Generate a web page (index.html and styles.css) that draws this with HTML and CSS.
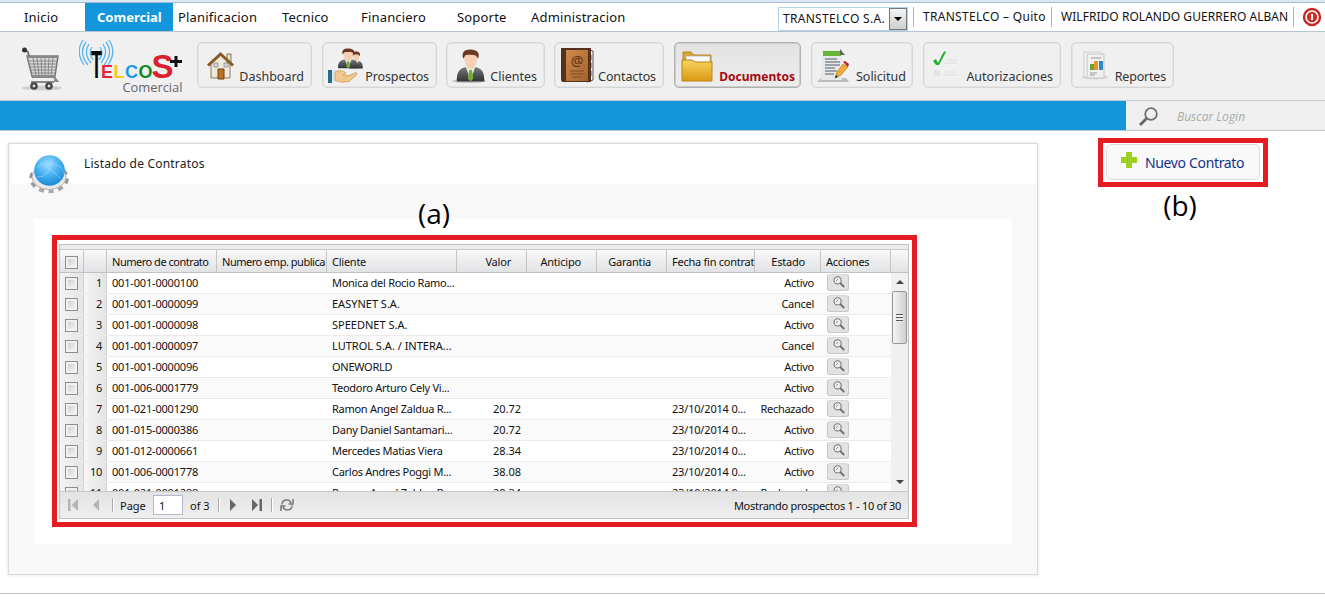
FILE: index.html
```html
<!DOCTYPE html>
<html lang="es">
<head>
<meta charset="utf-8">
<title>Telcos - Comercial</title>
<link rel="stylesheet" href="styles.css">
</head>
<body>
<svg width="0" height="0" class="defs">
  <defs>
    <linearGradient id="gold" x1="0" y1="0" x2="0" y2="1"><stop offset="0" stop-color="#f8d25c"/><stop offset="1" stop-color="#d99a14"/></linearGradient>
    <linearGradient id="suit" x1="0" y1="0" x2="0" y2="1"><stop offset="0" stop-color="#74787a"/><stop offset="1" stop-color="#303335"/></linearGradient>
    <linearGradient id="leather" x1="0" y1="0" x2="1" y2="1"><stop offset="0" stop-color="#d08a4a"/><stop offset="1" stop-color="#a4622c"/></linearGradient>
    <radialGradient id="globe" cx=".45" cy=".3" r=".75"><stop offset="0" stop-color="#9cdcff"/><stop offset=".5" stop-color="#46b0f0"/><stop offset="1" stop-color="#1583d4"/></radialGradient>
    <linearGradient id="metal" x1="0" y1="0" x2="0" y2="1"><stop offset="0" stop-color="#777"/><stop offset="1" stop-color="#aaa"/></linearGradient>
    <g id="person">
      <path d="M3 35c0-9 2-13 9-15l6 2 6-2c7 2 9 6 9 15z" fill="url(#suit)"/>
      <path d="M13 20l5 14 5-14z" fill="#e6efdc"/>
      <path d="M16.500 23h3l1.500 9-3 3-3-3z" fill="#79a83a"/>
      <path d="M11 9c0-6 14-6 14 0 0 7-3 13-7 13s-7-6-7-13z" fill="#f4cfb4"/>
      <path d="M10 11c-2-7 1-10 8-10s11 4 8 10c-1-3-3-4-5-4-4 0-8-1-9 1z" fill="#6b3a22"/>
    </g>
    <symbol id="lens" viewBox="0 0 12 12"><circle cx="4.600" cy="4.400" r="3.600" fill="#ededed" stroke="#777" stroke-width="1.100"/><path d="M7.200 7l4 4" stroke="#6e6e6e" stroke-width="1.800"/><path d="M3 5l2-2" stroke="#999"/></symbol>
  </defs>
</svg>

<nav class="topnav">
  <a class="tab t1">Inicio</a><a class="tab active">Comercial</a><a class="tab t3">Planificacion</a><a class="tab t4">Tecnico</a><a class="tab t5">Financiero</a><a class="tab t6">Soporte</a><a class="tab t7">Administracion</a>
  <div class="session">
    <div class="company"><span>TRANSTELCO S.A.</span><i class="drop"></i></div>
    <span class="office">TRANSTELCO – Quito</span>
    <span class="user">WILFRIDO ROLANDO GUERRERO ALBAN</span>
    <svg class="power" width="20" height="20"><circle cx="10" cy="10" r="8" fill="#fff" stroke="#c62a26" stroke-width="2.400"/><circle cx="10" cy="10" r="5.200" fill="#cf2f2a"/><path d="M10 7v6" stroke="#fff" stroke-width="2"/></svg>
  </div>
</nav>

<header class="toolbar">
  <svg class="cart" width="44" height="48">
    <ellipse cx="22" cy="42" rx="20" ry="2.500" fill="#cfcfcf"/>
    <path d="M5 4l3 2 5 26" stroke="#777" stroke-width="2" fill="none"/><circle cx="4.500" cy="4" r="2.500" fill="#333"/>
    <path d="M7 10h31l-3 20H12z" fill="#d9d9d9" stroke="#777" stroke-width="1.500"/>
    <path d="M9 15h28M10 18h26M10 21h26M11 24h24M12 27h23M13 12l3 18M17 12l2 18M21 12l1 18M25 12v18M29 12l-1 18M33 12l-2 18" stroke="#808080" stroke-width=".9"/>
    <path d="M7 11h31M12 31h23M11 36h23M34 31l3 4h-3" stroke="#888" stroke-width="2.200" fill="none"/>
    <circle cx="14" cy="40" r="3.800" fill="#444"/><circle cx="29" cy="40" r="3.800" fill="#444"/><circle cx="14" cy="40" r="1.400" fill="#ddd"/><circle cx="29" cy="40" r="1.400" fill="#ddd"/>
  </svg>
  <svg class="logo" width="110" height="62">
    <g fill="none" stroke="#5bb4ef" stroke-width="1.300">
      <path d="M13 10q-4 6 1 13M10 7q-6 9 2 19M7 5q-8 11 2 23M4 3q-8 12 1 25"/>
      <path d="M21 10q4 6-1 13M24 7q6 9-2 19M27 5q8 11-2 23M30 3q8 12-1 25"/>
    </g>
    <g class="logo-letters">
      <text x="12" y="41" fill="#0a0a0a" font-size="38" textLength="11" lengthAdjust="spacingAndGlyphs">T</text>
      <text x="22" y="41" fill="#e6253a" font-size="18" textLength="12" lengthAdjust="spacingAndGlyphs">E</text>
      <text x="34.500" y="41" fill="#f8c814" font-size="18" textLength="11" lengthAdjust="spacingAndGlyphs">L</text>
      <text x="46" y="41" fill="#1c9ce0" font-size="17.500" textLength="13" lengthAdjust="spacingAndGlyphs">C</text>
      <text x="59.500" y="41" fill="#138a26" font-size="17.500" textLength="14" lengthAdjust="spacingAndGlyphs">O</text>
      <text x="72.500" y="41" fill="#dc2030" font-size="34" textLength="22" lengthAdjust="spacingAndGlyphs">S</text>
    </g>
    <path d="M91 24.500h12M97 19v11" stroke="#111" stroke-width="3"/>
    <text class="logo-sub" x="43.500" y="55" textLength="60" lengthAdjust="spacing">Comercial</text>
  </svg>
  <div class="modules">
    <a class="module m1"><svg width="36" height="38"><path d="M8 18v14h19V18l-9-9z" fill="#eee9da" stroke="#8d7b60"/><path d="M24 8h4v9h-4z" fill="#e7e0d0" stroke="#8a7350"/><path d="M5 19.500L17.500 8 30 19.500" stroke="#8a5a28" stroke-width="3" fill="none"/><path d="M15 23h6v10h-6z" fill="#b87524" stroke="#6b4214"/><path d="M11 17h4v4h-4zM21 17h4v4h-4z" fill="#c8dbe8" stroke="#8b8169" stroke-width=".7"/></svg><span>Dashboard</span></a>
    <a class="module m2"><svg width="36" height="38"><use href="#person" transform="translate(20 5) scale(.45 .5)"/><use href="#person" transform="translate(8 2) scale(.68 .58)"/><path d="M2 24h8v11H2z" fill="#d8e6ee"/><path d="M0 24h4v13H0z" fill="#2b6a86"/><path d="M7 26q7-3 11 1l-3 2 6 .5 7-3q2 1 0 3l-7 6q-7 2-14-1z" fill="#f0c78c" stroke="#cf9b55" stroke-width=".8"/></svg><span>Prospectos</span></a>
    <a class="module m3"><svg width="36" height="38"><ellipse cx="17" cy="35" rx="17" ry="2" fill="#c6c6c6"/><use href="#person" transform="translate(2 2.500) scale(.92 .94)"/></svg><span>Clientes</span></a>
    <a class="module m4"><svg width="36" height="38"><path d="M27 3l6 2v29l-6 2z" fill="#f4f4f4" stroke="#555"/><path d="M31 9v5M31 17v5M31 25v5" stroke="#888" stroke-width="1.500"/><path d="M1 2h30v34H3q-2 0-2-3z" fill="#53311b"/><path d="M6 4h22v31H6z" fill="url(#leather)"/><text x="17" y="20" text-anchor="middle" font-size="14" fill="#5b3418">@</text><path d="M10 25h14M10 28h14M12 31h10" stroke="#81502a"/></svg><span>Contactos</span></a>
    <a class="module m5 current"><svg width="36" height="38"><path d="M3 33V6h8l3 3h17v24z" fill="#dba531" stroke="#bc841d"/><path d="M6 10h24v8H6z" fill="#fafafa" stroke="#aaa" stroke-width=".7"/><path d="M2 14h10l3 2h17v19H2z" fill="url(#gold)" stroke="#bd8418"/></svg><span>Documentos</span></a>
    <a class="module m6"><svg width="36" height="38"><path d="M0 36h32l-3-4H4z" fill="#bcbcbc"/><path d="M5 4h20v30H4z" fill="#e6e8ea"/><path d="M6 5h18v5H6z" fill="#66b634"/><path d="M23 3l5 6h-5z" fill="#656565"/><path d="M8 13h12M8 16h15M8 19h15M8 22h10M8 25h12M8 28h9" stroke="#858b91" stroke-width="1.300"/><path d="M18 32l2-6 6-8 5 3-7 8z" fill="#f1aa34" stroke="#b57320" stroke-width=".6"/><path d="M26 16l2-1 4 3-1 3z" fill="#b72525"/><path d="M18 32l1-3 2 2z" fill="#222"/></svg><span>Solicitud</span></a>
    <a class="module m7"><svg width="36" height="38"><path d="M17 14h11M15 17h13M17 26h10M15 29h13" stroke="#dedede"/><path d="M5 24h6v6H5z" fill="#e4e4e4"/><path d="M4 15l3-2 2 4 5-10q2-3 3-1L10 19H7z" fill="#20b12c"/></svg><span>Autorizaciones</span></a>
    <a class="module m8"><svg width="36" height="38"><ellipse cx="18" cy="31" rx="13" ry="2.500" fill="#d6d6d6"/><path d="M7 6h17v25H7z" fill="#f8f8f8" stroke="#ccc"/><path d="M10 8h17v24H10z" fill="#f1f1f1" stroke="#c3c3c3"/><path d="M14 12h10M13 27h7M13 29h5" stroke="#999"/><path d="M13 18h4v6h-4z" fill="#69a338"/><path d="M17 15h4v9h-4z" fill="#ee9230"/><path d="M22 15h4v9h-4z" fill="#2d89c2"/></svg><span>Reportes</span></a>
  </div>
</header>

<div class="searchbar">
  <div class="blue"></div>
  <div class="search"><svg width="22" height="22"><circle cx="13" cy="9" r="5.800" fill="none" stroke="#707070" stroke-width="1.800"/><path d="M8.500 13.500L2 20" stroke="#666" stroke-width="2.800"/></svg><span>Buscar Login</span></div>
</div>

<main class="page">
  <section class="panel">
    <div class="panel-head">
      <svg width="42" height="42"><ellipse cx="21" cy="24.500" rx="17.500" ry="12.500" fill="none" stroke="url(#metal)" stroke-width="4.500" stroke-dasharray="5 4.500"/><ellipse cx="21" cy="23" rx="17" ry="12.500" fill="#e8e8e8" stroke="#b3b3b3"/><circle cx="21.500" cy="16.500" r="15.300" fill="url(#globe)"/><path d="M9 14q8-8 18-4t9 11M9 23q12 2 16-19M12 9q11 5 21 16" stroke="#a5dcfb" stroke-width=".5" fill="none"/></svg>
      <h1>Listado de Contratos</h1>
    </div>
    <div class="content">
      <span class="note note-a">(a)</span>
      <div class="frame grid-frame">
        <div class="grid">
          <div class="grid-strip"></div>
          <div class="row head"><span><i class="check"></i></span><span></span><span>Numero de contrato</span><span>Numero emp. publica</span><span>Cliente</span><span class="r">Valor</span><span class="r">Anticipo</span><span class="r">Garantia</span><span>Fecha fin contrat</span><span class="r">Estado</span><span>Acciones</span><span></span></div>
          <div class="body">
            <div class="rows">
              <div class="row"><span><i class="check"></i></span><span>1</span><span class="num">001-001-0000100</span><span></span><span>Monica del Rocio Ramo...</span><span></span><span></span><span></span><span></span><span class="r">Activo</span><span><b class="view"><svg><use href="#lens"/></svg></b></span></div>
              <div class="row"><span><i class="check"></i></span><span>2</span><span class="num">001-001-0000099</span><span></span><span class="caps">EASYNET S.A.</span><span></span><span></span><span></span><span></span><span class="r">Cancel</span><span><b class="view"><svg><use href="#lens"/></svg></b></span></div>
              <div class="row"><span><i class="check"></i></span><span>3</span><span class="num">001-001-0000098</span><span></span><span class="caps">SPEEDNET S.A.</span><span></span><span></span><span></span><span></span><span class="r">Activo</span><span><b class="view"><svg><use href="#lens"/></svg></b></span></div>
              <div class="row"><span><i class="check"></i></span><span>4</span><span class="num">001-001-0000097</span><span></span><span class="caps">LUTROL S.A. / INTERA...</span><span></span><span></span><span></span><span></span><span class="r">Cancel</span><span><b class="view"><svg><use href="#lens"/></svg></b></span></div>
              <div class="row"><span><i class="check"></i></span><span>5</span><span class="num">001-001-0000096</span><span></span><span>ONEWORLD</span><span></span><span></span><span></span><span></span><span class="r">Activo</span><span><b class="view"><svg><use href="#lens"/></svg></b></span></div>
              <div class="row"><span><i class="check"></i></span><span>6</span><span class="num">001-006-0001779</span><span></span><span>Teodoro Arturo Cely Vi...</span><span></span><span></span><span></span><span></span><span class="r">Activo</span><span><b class="view"><svg><use href="#lens"/></svg></b></span></div>
              <div class="row"><span><i class="check"></i></span><span>7</span><span class="num">001-021-0001290</span><span></span><span>Ramon Angel Zaldua R...</span><span class="r num">20.72</span><span></span><span></span><span class="num">23/10/2014 0...</span><span class="r">Rechazado</span><span><b class="view"><svg><use href="#lens"/></svg></b></span></div>
              <div class="row"><span><i class="check"></i></span><span>8</span><span class="num">001-015-0000386</span><span></span><span>Dany Daniel Santamari...</span><span class="r num">20.72</span><span></span><span></span><span class="num">23/10/2014 0...</span><span class="r">Activo</span><span><b class="view"><svg><use href="#lens"/></svg></b></span></div>
              <div class="row"><span><i class="check"></i></span><span>9</span><span class="num">001-012-0000661</span><span></span><span>Mercedes Matias Viera</span><span class="r num">28.34</span><span></span><span></span><span class="num">23/10/2014 0...</span><span class="r">Activo</span><span><b class="view"><svg><use href="#lens"/></svg></b></span></div>
              <div class="row"><span><i class="check"></i></span><span>10</span><span class="num">001-006-0001778</span><span></span><span>Carlos Andres Poggi M...</span><span class="r num">38.08</span><span></span><span></span><span class="num">23/10/2014 0...</span><span class="r">Activo</span><span><b class="view"><svg><use href="#lens"/></svg></b></span></div>
              <div class="row"><span><i class="check"></i></span><span>11</span><span class="num">001-021-0001288</span><span></span><span>Ramon Angel Zaldua R...</span><span class="r num">28.34</span><span></span><span></span><span class="num">23/10/2014 0...</span><span class="r">Rechazado</span><span><b class="view"><svg><use href="#lens"/></svg></b></span></div>
            </div>
            <div class="scroll"><i class="up"></i><div class="thumb"><i></i></div><i class="down"></i></div>
          </div>
          <div class="paging">
            <svg class="p1" width="12" height="12"><path d="M1 0h2.500v12H1zM11 0v12L4.500 6z" fill="#b4b4b4"/></svg>
            <svg class="p2" width="8" height="12"><path d="M7 0v12L1 6z" fill="#b4b4b4"/></svg>
            <i class="sep"></i><span class="page-label">Page</span><span class="field">1</span><span class="of">of 3</span><i class="sep s2"></i>
            <svg class="p3" width="8" height="12"><path d="M1 0v12l6-6z" fill="#666"/></svg>
            <svg class="p4" width="12" height="12"><path d="M1 0v12l6-6zM8.500 0H11v12H8.500z" fill="#666"/></svg>
            <i class="sep s3"></i>
            <svg class="p5" width="14" height="14" fill="none" stroke="#777" stroke-width="1.500"><path d="M2 6.500q0-4.500 5-4.500 3 0 4 3M13 1v5H8.500M12 7.500q0 4.500-5 4.500-3 0-4-3M1 13V8h4.500"/></svg>
            <span class="total">Mostrando prospectos 1 - 10 of 30</span>
          </div>
        </div>
      </div>
    </div>
  </section>
  <aside class="actions">
    <div class="frame new-frame"><a class="new"><svg width="16" height="16"><path d="M5 0h6v5h5v6h-5v5H5v-5H0V5h5z" fill="#9bd11c"/></svg><span>Nuevo Contrato</span></a></div>
    <span class="note">(b)</span>
  </aside>
</main>
<footer class="bottom"></footer>
</body>
</html>
```
FILE: styles.css
```css
* { box-sizing: border-box; }
body { margin: 0; width: 1325px; height: 599px; overflow: hidden; background: #fff; font-family: "Noto Sans", sans-serif; color: #111; white-space: nowrap; }
i { font-style: normal; }
svg { display: block; flex: none; }
.defs { position: absolute; }

.topnav { height: 32px; display: flex; align-items: stretch; border-top: 2px solid #dce8f6; border-bottom: 1px solid #b8c3d0; box-shadow: inset 0 1px #a7bdd6; font-size: 13px; line-height: 30px; }
.tab { letter-spacing: .18px; }
.t1 { width: 85px; padding-left: 24px; }
.active { width: 88px; padding-left: 12px; background: #1496dc; color: #fff; font-weight: bold; margin-top: 1px; line-height: 28px; letter-spacing: 0; }
.t3 { width: 109px; padding-left: 5px; }
.t4 { width: 79px; }
.t5 { width: 96px; }
.t6 { width: 74px; }
.t7 { width: 247px; }
.session { display: flex; font-size: 12px; flex: 1; }
.company { width: 130px; height: 24px; margin-top: 5px; border: 1px solid #b5d0e5; display: flex; justify-content: space-between; padding: 0 0 0 4px; line-height: 22px; letter-spacing: .3px; }
.drop { width: 18px; height: 22px; border: 1px solid #707a80; background: linear-gradient(#f4f4f4, #cfcfcf); display: flex; align-items: center; justify-content: center; }
.drop::before { content: ""; border: 4px solid transparent; border-top-color: #000; border-bottom: 0; }
.office, .user { border-left: 1px solid #aeb5bc; height: 20px; margin-top: 5px; line-height: 20px; }
.office { margin-left: 5px; width: 138px; padding-left: 9px; letter-spacing: .3px; }
.user { width: 243px; padding-left: 9px; border-right: 1px solid #aeb5bc; letter-spacing: .04px; }
.power { margin: 5px 0 0 8px; }

.toolbar { height: 69px; background: #f0f0f0; border-bottom: 1px solid #c3cad3; display: flex; }
.cart { margin: 14px 0 0 20px; }
.logo { margin: 5px 0 0 15px; }
.logo-letters { font-family: "Liberation Sans", sans-serif; font-weight: bold; }
.logo-sub { font-family: "Open Sans", sans-serif; font-size: 13px; fill: #666; }
.modules { display: flex; padding: 10px 0 0 8px; gap: 10px; font-size: 12.5px; }
.module { height: 46px; border: 1px solid #d6d6d6; border-radius: 5px; box-shadow: inset 0 0 0 1px #e5e5e5; display: flex; justify-content: space-between; padding: 3px 7px 0 5px; color: #333; }
.module span { margin-top: 22px; line-height: 18px; }
.m1 { width: 115px; } .m2 { width: 115px; letter-spacing: -.1px; } .m3 { width: 99px; margin-left: -1px; } .m4 { width: 110px; margin-left: -1px; letter-spacing: -.1px; }
.m5 { width: 127px; padding-right: 5px; } .m6 { width: 102px; padding-right: 6px; } .m7 { width: 138px; } .m8 { width: 103px; letter-spacing: -.2px; }
.current { background: linear-gradient(#e2e2e2, #ededed); border-color: #b0b0b0; box-shadow: inset 0 0 0 1px #ccc; color: #a70710; font-weight: bold; font-size: 12px; }

.searchbar { height: 30px; display: flex; border-bottom: 1px solid #bfc8d0; }
.blue { width: 1126px; background: #1496dc; }
.search { flex: 1; background: #f0f0f0; display: flex; align-items: center; padding-left: 12px; font: italic 12px "Open Sans", sans-serif; color: #aaa; }
.search span { margin: 2px 0 0 17px; }

.page { display: flex; height: 462px; padding: 12px 0 0 8px; }
.panel { width: 1030px; height: 432px; border: 1px solid #dadada; background: #f8f8f8; box-shadow: 0 0 3px #ddd; }
.panel-head { height: 40px; margin-left: 2px; background: #fff; display: flex; }
.panel-head svg { margin: 10px 0 0 17px; }
h1 { margin: 11px 0 0 14px; font-size: 12px; font-weight: normal; line-height: 18px; letter-spacing: .2px; color: #222; }
.content { position: relative; margin: 35px 0 0 25px; width: 978px; height: 325px; background: #fff; padding: 16px 0 0 18px; }
.frame { border: 5px solid #e61c25; }
.grid-frame { width: 865px; height: 292px; padding: 4px 2px 0 2px; }
.note { font: 28px/34px "Open Sans", sans-serif; color: #000; }
.note-a { position: absolute; left: 384px; top: -23px; }

.grid { width: 850px; height: 275px; border: 1px solid #c2c2c2; font-size: 11px; letter-spacing: -.28px; }
.grid-strip { height: 5px; background: #ececec; border-bottom: 1px solid #c8c8c8; }
.row { display: grid; grid-template-columns: 24px 23px 110px 110px 130px 70px 70px 70px 88px 66px 70px 1fr; height: 21px; line-height: 20px; border-bottom: 1px solid #ebebeb; }
.row > span { padding-left: 5px; overflow: hidden; }
.row > .num { letter-spacing: -.18px; }
.row > .caps { letter-spacing: 0; }
.row > .r { text-align: right; padding: 0 7px 0 0; }
.row > .r.num { padding-right: 6px; letter-spacing: 0; }
.row > :nth-child(1), .row > :nth-child(2) { background: linear-gradient(90deg, #f5f5f5, #e4e4e4); border-right: 1px solid #d2d2d2; }
.row > :nth-child(2) { text-align: right; padding: 0 4px 0 0; }
.rows .row:nth-child(even) { background: #fafafa; }
.head { height: 23px; line-height: 23px; background: linear-gradient(#f8f8f8, #e2e3e5); border-bottom: 1px solid #c2c2c2; letter-spacing: -.48px; }
.head > span { border-right: 1px solid #c5c5c5; }
.head > .r { padding-right: 15px; letter-spacing: -.2px; }
.head > :nth-child(5), .head > :nth-child(9), .head > :nth-child(11) { letter-spacing: -.25px; }
.head > :last-child { border-right: 0; }
.head > :nth-child(1), .head > :nth-child(2) { background: none; border-color: #c5c5c5; }
.check { display: block; width: 13px; height: 13px; margin-top: 4px; border: 1px solid #8c8f92; background: linear-gradient(135deg, #c6cacd, #fafafa); box-shadow: inset 0 0 0 2px #f1f1f1; }
.head .check { margin-top: 6px; }
.view { display: block; width: 22px; height: 17px; margin: 1px 0 0 1px; border: 1px solid #c6c6c6; border-top-color: #d9d9d9; border-radius: 3px; background: #e2e2e2; padding: 1px 0 0 5px; }
.view svg { width: 12px; height: 12px; }
.body { height: 218px; overflow: hidden; display: flex; }
.rows { width: 831px; }
.scroll { width: 17px; height: 218px; background: #f0f0f0; display: flex; flex-direction: column; align-items: center; }
.up { margin-top: 7px; border: 4px solid transparent; border-bottom-color: #444; border-top: 0; }
.down { margin: auto 0 7px; border: 4px solid transparent; border-top-color: #444; border-bottom: 0; }
.thumb { width: 15px; height: 53px; margin-top: 7px; border: 1px solid #989898; border-radius: 2px; background: linear-gradient(90deg, #f5f5f5, #cfcfcf); display: flex; align-items: center; justify-content: center; }
.thumb i { width: 7px; height: 8px; background: repeating-linear-gradient(#555 0 1px, #eee 1px 3px); }
.paging { height: 27px; background: linear-gradient(#e3e3e3, #efefef); border-top: 1px solid #c8c8c8; display: flex; align-items: center; padding-left: 7px; }
.paging > svg { margin-top: -1px; }
.p2 { margin-left: 13px; }
.sep { width: 2px; height: 14px; border-left: 1px solid #aaa; border-right: 1px solid #fff; margin-left: 12px; }
.page-label { width: 33px; margin-left: 6px; letter-spacing: 0; }
.field { width: 30px; height: 20px; border: 1px solid #b5b8c8; background: #fff; padding-left: 5px; line-height: 19px; }
.of { margin-left: 7px; width: 20px; letter-spacing: 0; }
.s2 { margin-left: 8px; }
.p3 { margin-left: 9px; } .p4 { margin-left: 14px; } .s3 { margin-left: 8px; } .p5 { margin-left: 7px; }
.total { margin: 0 7px 0 auto; }

.actions { width: 170px; margin: -5px 0 0 60px; display: flex; flex-direction: column; align-items: center; }
.new-frame { width: 170px; height: 49px; padding: 1px 3px; }
.new { width: 154px; height: 36px; border: 1px solid #ddd; border-radius: 5px; background: #f9f9f9; display: flex; align-items: center; padding-left: 15px; font-size: 14px; letter-spacing: -.35px; color: #16328c; }
.new svg { margin: -4px 0 0 -1px; }
.new span { margin-left: 8px; }
.actions .note { margin: 1px 0 0 -6px; }
.bottom { height: 6px; border-top: 1px solid #bfc8d0; }
```
